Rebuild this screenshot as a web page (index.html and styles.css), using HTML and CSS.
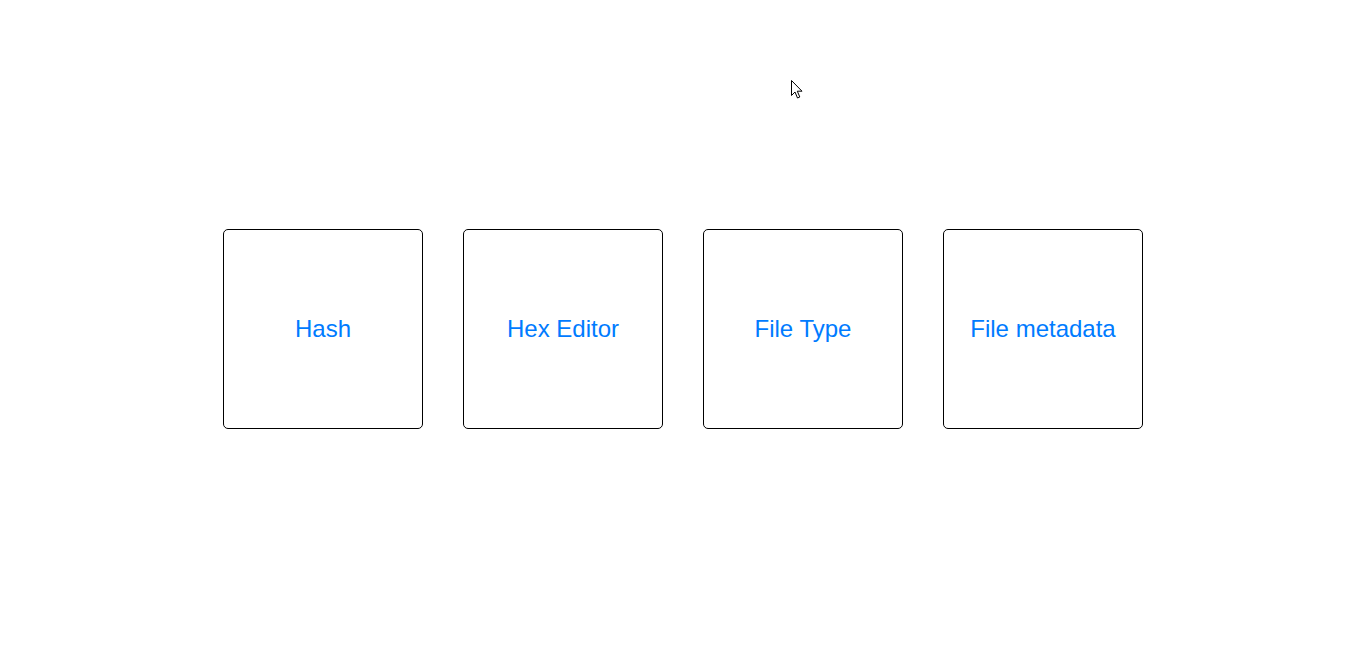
FILE: index.html
```html
<!DOCTYPE html>
<html>
<head>
<meta charset="utf-8">
<link rel="stylesheet" href="styles.css">
</head>
<body>
<main class="page">
  <div class="tiles">
    <a class="tile" href="#">Hash</a>
    <a class="tile" href="#">Hex Editor</a>
    <a class="tile" href="#">File Type</a>
    <a class="tile" href="#">File metadata</a>
  </div>
</main>
<svg class="cursor" width="13" height="20" viewBox="0 0 13 20">
  <path d="M0.5 0.5 L0.5 15.5 L4 12 L6.5 18 L8.8 17 L6.3 11.2 L11 11.2 Z" fill="#fff" stroke="#000" stroke-width="1" stroke-linejoin="miter"/>
</svg>
</body>
</html>
```
FILE: styles.css
```css
html, body {
  margin: 0;
  padding: 0;
  background: #fff;
}
body {
  font-family: "Liberation Sans", Arial, sans-serif;
}
.page {
  height: 657px;
  display: flex;
  align-items: center;
  justify-content: center;
}
.tiles {
  display: flex;
  gap: 40px;
}
.tile {
  box-sizing: border-box;
  width: 200px;
  height: 200px;
  padding-top: 2px;
  border: 1px solid #000;
  border-radius: 5px;
  display: flex;
  align-items: center;
  justify-content: center;
  color: #007bff;
  text-decoration: none;
  font-size: 24px;
  line-height: 1.2;
}
.cursor {
  position: absolute;
  left: 791px;
  top: 80px;
}
```
